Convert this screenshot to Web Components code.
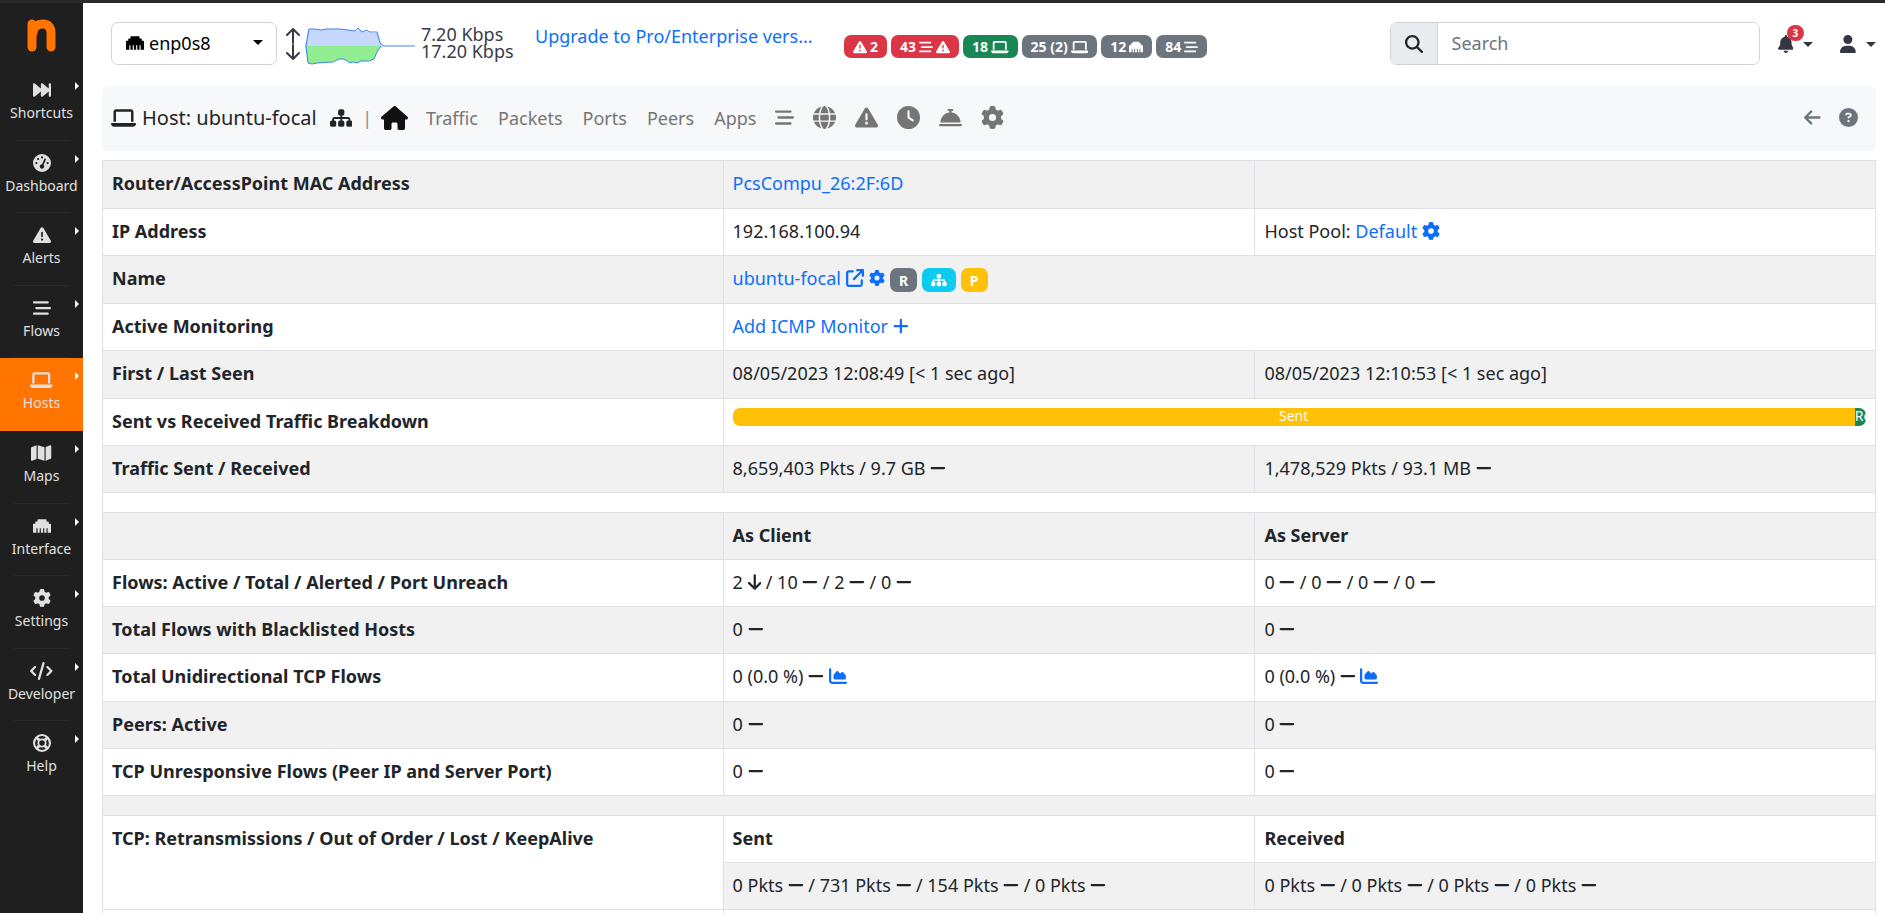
<!DOCTYPE html>
<html lang="en">
<head>
<meta charset="utf-8">
<meta name="viewport" content="width=device-width, initial-scale=1">
<title>Host: ubuntu-focal</title>
<style>
  body { margin: 0; font: 18px/28px "Noto Sans", sans-serif; color: #212529; background: #fff; overflow: hidden; }
</style>
</head>
<body>
<nt-app></nt-app>
<script>
const ICONS = {
  ethernet: [512, 'M496 192h-48v-48c0-8.800-7.200-16-16-16h-48V80c0-8.800-7.200-16-16-16H144c-8.800 0-16 7.200-16 16v48H80c-8.800 0-16 7.200-16 16v48H16c-8.800 0-16 7.200-16 16v224c0 8.800 7.200 16 16 16h80V320h32v128h64V320h32v128h64V320h32v128h64V320h32v128h80c8.800 0 16-7.200 16-16V208c0-8.800-7.200-16-16-16z'],
  warning: [512, 'M256 32c14.200 0 27.300 7.500 34.500 19.800l216 368c7.300 12.400 7.300 27.700 .2 40.100S486.300 480 472 480H40c-14.300 0-27.600-7.700-34.700-20.100s-7-27.800 .2-40.100l216-368C228.700 39.500 241.800 32 256 32zm0 128c-13.300 0-24 10.700-24 24V296c0 13.300 10.700 24 24 24s24-10.700 24-24V184c0-13.300-10.700-24-24-24zm32 224a32 32 0 1 0 -64 0 32 32 0 1 0 64 0z'],
  laptop: [640, 'M128 32C92.700 32 64 60.700 64 96V352h64V96H512V352h64V96c0-35.300-28.700-64-64-64H128zM19.200 384C8.600 384 0 392.600 0 403.200C0 445.600 34.400 480 76.800 480H563.200c42.400 0 76.800-34.400 76.800-76.800c0-10.600-8.600-19.200-19.200-19.200H19.200z'],
  stream: [512, 'M0 96C0 78.300 14.300 64 32 64H416c17.700 0 32 14.300 32 32s-14.300 32-32 32H32C14.300 128 0 113.700 0 96zM64 256c0-17.700 14.300-32 32-32H480c17.700 0 32 14.300 32 32s-14.300 32-32 32H96c-17.700 0-32-14.300-32-32zM448 416c0 17.700-14.300 32-32 32H32c-17.700 0-32-14.300-32-32s14.300-32 32-32H416c17.700 0 32 14.300 32 32z'],
  gear: [512, 'M495.9 166.6c3.2 8.7 .5 18.4-6.4 24.6l-43.3 39.4c1.1 8.3 1.7 16.8 1.7 25.4s-.6 17.1-1.7 25.4l43.3 39.4c6.9 6.2 9.6 15.9 6.4 24.6c-4.4 11.9-9.7 23.3-15.8 34.3l-4.7 8.1c-6.6 11-14 21.4-22.1 31.2c-5.9 7.2-15.7 9.6-24.5 6.8l-55.7-17.7c-13.4 10.3-28.2 18.9-44 25.4l-12.5 57.1c-2 9.1-9 16.3-18.2 17.8c-13.8 2.3-28 3.5-42.5 3.5s-28.7-1.2-42.5-3.5c-9.2-1.5-16.2-8.7-18.2-17.8l-12.5-57.1c-15.8-6.5-30.6-15.1-44-25.4L83.1 425.9c-8.8 2.8-18.6 .3-24.5-6.8c-8.1-9.8-15.5-20.2-22.1-31.2l-4.7-8.1c-6.1-11-11.4-22.4-15.8-34.3c-3.2-8.7-.5-18.4 6.4-24.6l43.3-39.4C64.6 273.1 64 264.6 64 256s.6-17.1 1.7-25.4L22.4 191.2c-6.9-6.2-9.6-15.9-6.4-24.6c4.4-11.9 9.7-23.3 15.8-34.3l4.7-8.1c6.6-11 14-21.4 22.1-31.2c5.9-7.2 15.7-9.6 24.5-6.8l55.7 17.7c13.4-10.3 28.2-18.9 44-25.4l12.5-57.1c2-9.1 9-16.3 18.2-17.8C227.3 1.2 241.5 0 256 0s28.7 1.2 42.5 3.5c9.2 1.5 16.2 8.7 18.2 17.8l12.5 57.1c15.8 6.5 30.6 15.1 44 25.4l55.7-17.7c8.8-2.8 18.6-.3 24.5 6.8c8.1 9.8 15.5 20.2 22.1 31.2l4.7 8.1c6.1 11 11.4 22.4 15.8 34.3zM256 336a80 80 0 1 0 0-160 80 80 0 1 0 0 160z'],
  sitemap: [576, 'M208 80c0-26.5 21.5-48 48-48h64c26.500 0 48 21.500 48 48v64c0 26.500-21.500 48-48 48h-8v40H464c30.900 0 56 25.100 56 56v32h8c26.500 0 48 21.500 48 48v64c0 26.500-21.500 48-48 48H464c-26.500 0-48-21.500-48-48V368c0-26.500 21.500-48 48-48h8V288c0-4.400-3.600-8-8-8H312v40h8c26.500 0 48 21.500 48 48v64c0 26.500-21.500 48-48 48H256c-26.500 0-48-21.500-48-48V368c0-26.500 21.500-48 48-48h8V280H112c-4.400 0-8 3.600-8 8v32h8c26.500 0 48 21.500 48 48v64c0 26.500-21.500 48-48 48H48c-26.500 0-48-21.500-48-48V368c0-26.500 21.500-48 48-48h8V288c0-30.900 25.100-56 56-56H264V192h-8c-26.500 0-48-21.500-48-48V80z'],
  home: [576, 'M575.8 255.5c0 18-15 32.1-32 32.1h-32l.7 160.2c0 2.7-.2 5.4-.5 8.1V472c0 22.1-17.9 40-40 40H456c-1.1 0-2.2 0-3.3-.1c-1.4 .1-2.8 .1-4.2 .1H416 392c-22.1 0-40-17.9-40-40V448 384c0-17.7-14.3-32-32-32H256c-17.7 0-32 14.3-32 32v64 24c0 22.1-17.9 40-40 40H160 128.1c-1.5 0-3-.1-4.5-.2c-1.2 .1-2.4 .2-3.6 .2H104c-22.1 0-40-17.9-40-40V360c0-.9 0-1.9 .1-2.8V287.6H32c-18 0-32-14-32-32.1c0-9 3-17 10-24L266.4 8c7-7 15-8 22-8s15 2 21 7L564.8 231.5c8 7 12 15 11 24z'],
  globe: [512, 'M352 256c0 22.2-1.2 43.6-3.3 64H163.3c-2.2-20.4-3.3-41.8-3.3-64s1.2-43.6 3.3-64H348.7c2.2 20.4 3.3 41.8 3.3 64zm28.8-64H503.9c5.3 20.5 8.1 41.9 8.1 64s-2.8 43.5-8.1 64H380.8c2.1-20.6 3.2-42 3.2-64s-1.1-43.4-3.2-64zm112.6-32H376.7c-10-63.9-29.8-117.4-55.3-151.6c78.3 20.7 142 77.5 171.9 151.6zm-149.1 0H167.7c6.1-36.4 15.5-68.6 27-94.7c10.5-23.6 22.2-40.7 33.5-51.5C239.4 3.2 248.7 0 256 0s16.6 3.2 27.8 13.8c11.3 10.8 23 27.9 33.5 51.5c11.6 26 20.9 58.2 27 94.7zm-209 0H18.6C48.6 85.900 112.2 29.100 190.600 8.400C165.100 42.600 145.300 96.100 135.300 160zM8.100 192H131.200c-2.100 20.600-3.200 42-3.200 64s1.100 43.400 3.200 64H8.100C2.800 299.500 0 278.100 0 256s2.800-43.500 8.100-64zM194.700 446.600c-11.600-26-20.900-58.200-27-94.600H344.300c-6.100 36.400-15.500 68.600-27 94.600c-10.500 23.600-22.200 40.700-33.500 51.500C272.600 508.800 263.300 512 256 512s-16.600-3.200-27.800-13.800c-11.300-10.800-23-27.900-33.500-51.500zM135.300 352c10 63.900 29.800 117.400 55.300 151.600C112.200 482.900 48.600 426.100 18.600 352H135.300zm358.100 0c-30 74.100-93.600 130.900-171.900 151.600c25.500-34.200 45.200-87.700 55.300-151.600H493.400z'],
  clock: [512, 'M256 0a256 256 0 1 1 0 512A256 256 0 1 1 256 0zM232 120V256c0 8 4 15.5 10.7 20l96 64c11 7.4 25.9 4.4 33.3-6.7s4.4-25.9-6.7-33.3L280 243.2V120c0-13.3-10.7-24-24-24s-24 10.7-24 24z'],
  concierge: [512, 'M216 64c-13.3 0-24 10.7-24 24s10.7 24 24 24h16v33.3C119.6 157.2 32 252.4 32 368H480c0-115.6-87.6-210.8-200-222.7V112h16c13.3 0 24-10.7 24-24s-10.7-24-24-24H256 216zM24 400c-13.3 0-24 10.7-24 24s10.7 24 24 24H488c13.3 0 24-10.7 24-24s-10.7-24-24-24H24z'],
  back: [448, 'M9.4 233.4c-12.5 12.5-12.5 32.8 0 45.3l160 160c12.5 12.5 32.8 12.5 45.3 0s12.5-32.8 0-45.3L109.2 288 416 288c17.7 0 32-14.3 32-32s-14.3-32-32-32l-306.700 0L214.600 118.600c12.500-12.500 12.500-32.800 0-45.300s-32.800-12.500-45.300 0l-160 160z'],
  down: [384, 'M169.4 470.6c12.5 12.5 32.8 12.5 45.3 0l160-160c12.5-12.5 12.5-32.8 0-45.3s-32.8-12.5-45.3 0L224 370.8 224 64c0-17.7-14.3-32-32-32s-32 14.3-32 32l0 306.700L54.600 265.400c-12.500-12.500-32.800-12.500-45.300 0s-12.500 32.800 0 45.300l160 160z'],
  question: [512, 'M256 512A256 256 0 1 0 256 0a256 256 0 1 0 0 512zM169.8 165.3c7.9-22.3 29.1-37.3 52.8-37.3h58.3c34.9 0 63.1 28.3 63.1 63.1c0 22.6-12.1 43.5-31.7 54.8L280 264.4c-.2 13-10.9 23.6-24 23.6c-13.3 0-24-10.7-24-24V250.5c0-8.6 4.6-16.5 12.1-20.800l44.300-25.400c4.700-2.700 7.600-7.700 7.600-13.100c0-8.400-6.800-15.100-15.100-15.100H222.600c-3.400 0-6.400 2.100-7.500 5.300l-.4 1.200c-4.400 12.500-18.200 19-30.600 14.600s-19-18.200-14.600-30.600l.4-1.200zM224 352a32 32 0 1 1 64 0 32 32 0 1 1 -64 0z'],
  minus: [448, 'M432 256c0 17.7-14.3 32-32 32L48 288c-17.7 0-32-14.3-32-32s14.3-32 32-32l352 0c17.7 0 32 14.3 32 32z'],
  plus: [448, 'M256 80c0-17.7-14.3-32-32-32s-32 14.3-32 32V224H48c-17.7 0-32 14.3-32 32s14.3 32 32 32H192V432c0 17.7 14.3 32 32 32s32-14.3 32-32V288H400c17.7 0 32-14.3 32-32s-14.3-32-32-32H256V80z'],
  chart: [512, 'M64 64c0-17.7-14.3-32-32-32S0 46.3 0 64V400c0 44.2 35.8 80 80 80H480c17.7 0 32-14.3 32-32s-14.3-32-32-32H80c-8.800 0-16-7.200-16-16V64zm96 288H448c17.700 0 32-14.300 32-32V251.800c0-7.600-2.700-15-7.700-20.800l-65.800-76.800c-12.100-14.200-33.700-15-46.900-1.800l-21 21c-10 10-26.400 9.200-35.400-1.600l-39.200-47c-12.600-15.100-35.700-15.400-48.700-.6L135.900 215c-5.100 5.800-7.900 13.300-7.900 21.100v84c0 17.700 14.300 32 32 32z'],
  user: [448, 'M224 256A128 128 0 1 0 224 0a128 128 0 1 0 0 256zm-45.7 48C79.8 304 0 383.8 0 482.3C0 498.7 13.3 512 29.7 512H418.3c16.4 0 29.7-13.3 29.7-29.7C448 383.8 368.2 304 269.7 304H178.3z'],
  bell: [448, 'M224 0c-17.7 0-32 14.3-32 32V51.2C119 66 64 130.6 64 208v18.8c0 47-17.3 92.4-48.5 127.6l-7.4 8.3c-8.4 9.4-10.4 22.9-5.3 34.4S19.4 416 32 416H416c12.6 0 24-7.4 29.2-18.9s3.100-25-5.300-34.400l-7.400-8.300C401.300 319.200 384 273.900 384 226.800V208c0-77.400-55-142-128-156.800V32c0-17.700-14.300-32-32-32zm45.300 493.300c12-12 18.700-28.300 18.700-45.300H224 160c0 17 6.700 33.300 18.700 45.300s28.300 18.700 45.300 18.700s33.300-6.700 45.300-18.700z'],
  search: [512, 'M416 208c0 45.9-14.9 88.3-40 122.7L502.6 457.4c12.5 12.5 12.5 32.8 0 45.3s-32.8 12.5-45.3 0L330.7 376c-34.4 25.2-76.8 40-122.7 40C93.1 416 0 322.9 0 208S93.1 0 208 0S416 93.1 416 208zM208 352a144 144 0 1 0 0-288 144 144 0 1 0 0 288z'],
  forward: [512, 'M18.4 445c11.2 5.3 24.5 3.6 34.1-4.4L224 297.7V416c0 12.4 7.2 23.7 18.4 29s24.5 3.6 34.1-4.4L448 297.7V416c0 17.7 14.3 32 32 32s32-14.3 32-32V96c0-17.7-14.3-32-32-32s-32 14.3-32 32V214.3L276.5 71.4c-9.5-7.9-22.8-9.7-34.1-4.4S224 83.6 224 96V214.3L52.5 71.4c-9.5-7.9-22.8-9.7-34.1-4.4S0 83.6 0 96V416c0 12.4 7.2 23.7 18.4 29z'],
  gauge: [512, 'M0 256a256 256 0 1 1 512 0A256 256 0 1 1 0 256zM288 96a32 32 0 1 0 -64 0 32 32 0 1 0 64 0zM256 416c35.3 0 64-28.7 64-64c0-17.4-6.9-33.1-18.1-44.6L366 161.7c5.3-12.1-.2-26.3-12.3-31.6s-26.3 .2-31.6 12.3L257.9 288c-.6 0-1.3 0-1.9 0c-35.3 0-64 28.7-64 64s28.7 64 64 64zM176 144a32 32 0 1 0 -64 0 32 32 0 1 0 64 0zM96 288a32 32 0 1 0 0-64 32 32 0 1 0 0 64zm352-32a32 32 0 1 0 -64 0 32 32 0 1 0 64 0z'],
  map: [576, 'M384 476.1L192 421.2V35.9L384 90.8V476.1zm32-1.200V88.400L543.100 37.500c15.800-6.300 32.900 5.300 32.900 22.300V394.600c0 9.800-6 18.600-15.100 22.300L416 474.800zM15.100 95.100L160 37.200V423.600L32.900 474.500C17.100 480.800 0 469.200 0 452.200V117.400c0-9.800 6-18.600 15.100-22.300z'],
  code: [640, 'M392.8 1.2c-17-4.9-34.7 5-39.6 22l-128 448c-4.9 17 5 34.7 22 39.6s34.7-5 39.6-22l128-448c4.9-17-5-34.7-22-39.6zm80.6 120.1c-12.5 12.5-12.5 32.8 0 45.3L562.7 256l-89.4 89.4c-12.5 12.5-12.5 32.8 0 45.3s32.8 12.5 45.3 0l112-112c12.5-12.5 12.5-32.8 0-45.3l-112-112c-12.5-12.5-32.8-12.5-45.3 0zm-306.700 0c-12.500-12.500-32.800-12.500-45.300 0l-112 112c-12.500 12.500-12.500 32.800 0 45.300l112 112c12.500 12.500 32.800 12.500 45.300 0s12.500-32.800 0-45.300L77.300 256l89.400-89.400c12.500-12.500 12.500-32.800 0-45.300z'],
  external: [512, 'M320 0c-17.7 0-32 14.3-32 32s14.3 32 32 32h82.7L201.4 265.4c-12.5 12.5-12.5 32.8 0 45.3s32.8 12.5 45.3 0L448 109.3V192c0 17.7 14.3 32 32 32s32-14.3 32-32V32c0-17.7-14.3-32-32-32H320zM80 32C35.8 32 0 67.8 0 112V432c0 44.2 35.8 80 80 80H400c44.2 0 80-35.8 80-80V320c0-17.7-14.3-32-32-32s-32 14.3-32 32V432c0 8.8-7.2 16-16 16H80c-8.800 0-16-7.200-16-16V112c0-8.800 7.200-16 16-16H192c17.700 0 32-14.300 32-32s-14.300-32-32-32H80z'],
};
const LIFE_RING = `<g fill="none" stroke="currentColor"><circle cx="256" cy="256" r="226" stroke-width="60"/><circle cx="256" cy="256" r="104" stroke-width="52"/><path stroke-width="84" d="M98 98l80 80M414 98l-80 80M98 414l80-80M414 414l-80-80"/></g>`;

function define(name, html, setup) {
  const template = document.createElement('template');
  template.innerHTML = html;
  customElements.define(name, class extends HTMLElement {
    constructor() {
      super();
      this.attachShadow({ mode: 'open' }).append(template.content.cloneNode(true));
    }
    connectedCallback() { if (setup) setup(this, this.shadowRoot); }
  });
}

define('ui-icon', `<style>
  :host { display: inline-block; height: 1em; line-height: 0; vertical-align: -2px; flex: none; }
  svg { display: block; height: 1em; width: auto; fill: currentColor; }
</style><svg aria-hidden="true"></svg>`, (host, root) => {
  const name = host.getAttribute('name');
  const svg = root.querySelector('svg');
  const [width, d] = ICONS[name] || [512, ''];
  svg.setAttribute('viewBox', `0 0 ${width} 512`);
  svg.innerHTML = name === 'lifering' ? LIFE_RING : `<path d="${d}"/>`;
});

define('ui-badge', `<style>
  :host { display: inline-flex; align-items: center; gap: 3px; box-sizing: border-box; height: 23px; padding: 0 9px; border-radius: 7px;
    font-size: 14px; line-height: 23px; font-weight: 700; color: #fff; background: #6c757d; white-space: nowrap; }
  :host([tone=danger]) { background: #dc3545; }
  :host([tone=success]) { background: #198754; }
  :host([tone=info]) { background: #0dcaf0; }
  :host([tone=warning]) { background: #ffc107; }
</style><slot></slot>`);

define('side-item', `<style>
  :host { display: block; color: #e0e0e0; }
  a { position: relative; box-sizing: border-box; height: 100%; padding-top: 13px; display: flex; flex-direction: column; align-items: center; gap: 3px;
    color: inherit; text-decoration: none; font-size: 14px; line-height: 21px; }
  a::before { content: ""; position: absolute; top: 14px; right: 4px; border: 4px solid transparent; border-left-color: #fff; border-right: 0; }
  a::after { content: ""; position: absolute; bottom: 0; left: 14px; right: 14px; height: 1px; background: #292929; }
  ui-icon { font-size: 18px; }
  :host([active]) { background: #ff7500; }
  :host([active]) a::after, :host([last]) a::after { display: none; }
</style><a href="#"><ui-icon></ui-icon><slot></slot></a>`, (host, root) => {
  const old = root.querySelector('ui-icon');
  const icon = document.createElement('ui-icon');
  icon.setAttribute('name', host.getAttribute('icon'));
  old.replaceWith(icon);
});

define('app-sidebar', `<style>
  :host { display: block; background: #1f1f1f; }
  .logo { display: flex; justify-content: center; padding: 16px 0; }
  svg { display: block; }
  nav { display: grid; grid-auto-rows: 1fr; min-height: 726px; }
</style>
<a class="logo" href="#" aria-label="ntopng home"><svg width="30" height="33" viewBox="0 0 30 33" fill="none" stroke="#ff7500" stroke-linecap="round" stroke-linejoin="round"><path stroke-width="9" d="M5 5v23"/><path stroke-width="9" d="M24 28V14c0-6-3-9-8-9-5 0-10 3-10 9"/></svg></a>
<nav aria-label="Main">
  <side-item icon="forward">Shortcuts</side-item>
  <side-item icon="gauge">Dashboard</side-item>
  <side-item icon="warning">Alerts</side-item>
  <side-item icon="stream">Flows</side-item>
  <side-item icon="laptop" active>Hosts</side-item>
  <side-item icon="map">Maps</side-item>
  <side-item icon="ethernet">Interface</side-item>
  <side-item icon="gear">Settings</side-item>
  <side-item icon="code">Developer</side-item>
  <side-item icon="lifering" last>Help</side-item>
</nav>`);

define('top-bar', `<style>
  :host { display: flex; align-items: flex-start; padding: 19px 0 21px 9px; }
  :host > * { flex: none; }
  .iface { position: relative; width: 166px; height: 43px; }
  select { appearance: none; box-sizing: border-box; width: 100%; height: 43px; padding: 0 0 2px 37px; border: 1px solid #ced4da; border-radius: 7px;
    background: #fff; font: inherit; color: #000; }
  .iface ui-icon { position: absolute; left: 15px; top: 12px; color: #000; pointer-events: none; }
  .caret { width: 0; border: 5px solid transparent; border-top-color: currentColor; border-bottom: 0; }
  .iface .caret { position: absolute; right: 14px; top: 18px; color: #000; pointer-events: none; }
  .arrows { margin: 5px 0 0 9px; color: #373c48; }
  .graph { margin: 5px 0 0 4px; }
  .rate { margin: 4px 0 0 6px; line-height: 17px; color: #373c48; width: 95px; }
  a.up { margin: 0 0 0 19px; width: 290px; color: #0d6efd; text-decoration: none; white-space: nowrap; line-height: 28px; }
  .badges { display: flex; gap: 4px; margin: 13px auto 0 19px; }
  .search { display: flex; width: 370px; height: 43px; box-sizing: border-box; border: 1px solid #ced4da; border-radius: 7px; overflow: hidden; }
  .search label { display: grid; place-items: center; width: 46px; background: #e9ecef; border-right: 1px solid #ced4da; }
  input { flex: 1; min-width: 0; border: 0; padding: 0 14px 2px; font: inherit; outline: 0; }
  input::placeholder { color: #6c757d; opacity: 1; }
  button { position: relative; display: flex; align-items: center; margin: 0; padding: 0; border: 0; background: none; color: #343741; font: inherit; }
  .bell { margin: 13px 0 0 18px; gap: 10px; }
  .user { margin: 13px 0 0 27px; gap: 10px; }
  .count { position: absolute; left: 9px; top: -10px; height: 16px; padding: 0 6px; border-radius: 8px; background: #dc3545; color: #fff; font-size: 10px; line-height: 16px; font-weight: 700; }
</style>
<div class="iface"><select aria-label="Interface"><option>enp0s8</option></select><ui-icon name="ethernet"></ui-icon><span class="caret"></span></div>
<svg class="arrows" width="15" height="34" viewBox="0 0 15 34" fill="none" stroke="currentColor" stroke-width="2" stroke-linecap="round" stroke-linejoin="round"><path d="M7 16V2M1 8l6-6 6 6M7 18v14M1 26l6 6 6-6"/></svg>
<svg class="graph" width="110" height="38" viewBox="0 0 110 38"><path fill="#c6d8fb" d="M0 19L3 2h5l8 1 4-1h15l8 1 8 1 3-2 4 3 5-1 2 2h8l4 13 2 1z"/><path fill="#90ee90" d="M0 19l3 17 4 1 5-1 15-1 7-3h5l6 4 3-1 4 1 4-2h9l4-2 4-9 4-4z"/><path fill="none" stroke="#3f83f8" d="M1 19L4 2h5l8 1 4-1h14l8 1 7 1 3-3 4 4 5-2 2 2h8l3 11 4 3h31M1 19l2 17 4 1 5-1 16-1 6-3h5l6 4 3-1 4 1 4-2h8l5-2 3-7 4-6"/></svg>
<div class="rate">7.20 Kbps<br>17.20 Kbps</div>
<a class="up" href="#">Upgrade to Pro/Enterprise vers...</a>
<div class="badges">
  <ui-badge tone="danger"><ui-icon name="warning"></ui-icon>2</ui-badge>
  <ui-badge tone="danger">43<ui-icon name="stream"></ui-icon><ui-icon name="warning"></ui-icon></ui-badge>
  <ui-badge tone="success">18<ui-icon name="laptop"></ui-icon></ui-badge>
  <ui-badge>25 (2)<ui-icon name="laptop"></ui-icon></ui-badge>
  <ui-badge>12<ui-icon name="ethernet"></ui-icon></ui-badge>
  <ui-badge>84<ui-icon name="stream"></ui-icon></ui-badge>
</div>
<div class="search"><label for="q" aria-label="Search"><ui-icon name="search"></ui-icon></label><input id="q" type="text" placeholder="Search"></div>
<button class="bell" aria-label="Notifications"><ui-icon name="bell"></ui-icon><span class="count">3</span><span class="caret"></span></button>
<button class="user" aria-label="Account"><ui-icon name="user"></ui-icon><span class="caret"></span></button>`);

define('host-nav', `<style>
  :host { display: flex; align-items: center; box-sizing: border-box; height: 65px; padding: 0 18px 2px 9px; border-radius: 6px; background: #f7f8fa; color: #757575; }
  .title { display: flex; align-items: center; gap: 6px; font-size: 20px; color: #212529; }
  .title a { margin-left: 7px; }
  .bar { margin: 0 9px 0 10px; color: #8a8d91; }
  a { color: inherit; text-decoration: none; display: block; }
  .home { color: #111; font-size: 24px; margin-right: 18px; }
  .home, .icons a, .title a, .tools a { display: flex; }
  .links { display: flex; align-items: center; gap: 20px; }
  .icons { display: flex; align-items: center; gap: 19px; margin-left: 19px; font-size: 23px; }
  .icons .flows { font-size: 19px; }
  .tools { margin-left: auto; display: flex; align-items: center; gap: 18px; color: #6c757d; font-size: 19px; }
</style>
<div class="title"><ui-icon name="laptop"></ui-icon><span>Host: ubuntu-focal</span><a href="#" aria-label="Map"><ui-icon name="sitemap"></ui-icon></a></div>
<span class="bar">|</span>
<a class="home" href="#" aria-label="Home"><ui-icon name="home"></ui-icon></a>
<div class="links"><a href="#">Traffic</a><a href="#">Packets</a><a href="#">Ports</a><a href="#">Peers</a><a href="#">Apps</a></div>
<div class="icons">
  <a class="flows" href="#" aria-label="Flows"><ui-icon name="stream"></ui-icon></a>
  <a href="#" aria-label="Geo map"><ui-icon name="globe"></ui-icon></a>
  <a href="#" aria-label="Alerts"><ui-icon name="warning"></ui-icon></a>
  <a href="#" aria-label="Timeseries"><ui-icon name="clock"></ui-icon></a>
  <a href="#" aria-label="Services"><ui-icon name="concierge"></ui-icon></a>
  <a href="#" aria-label="Settings"><ui-icon name="gear"></ui-icon></a>
</div>
<div class="tools"><a href="#" aria-label="Back"><ui-icon name="back"></ui-icon></a><a href="#" aria-label="Help"><ui-icon name="question"></ui-icon></a></div>`);

define('traffic-bar', `<style>
  :host { display: flex; height: 18px; margin-top: 1px; border-radius: 7px; overflow: hidden; font-size: 14px; line-height: 16px; color: #fff; }
  div { overflow: hidden; white-space: nowrap; }
  .sent { flex: 1; background: #ffc107; text-align: center; }
  .received { flex: 0 0 1%; background: #198754; }
</style><div class="sent">Sent</div><div class="received">Received</div>`);

const dash = '<ui-icon name="minus"></ui-icon>';
const series = values => values.map(v => `${v} ${dash}`).join(' / ');
const pair = (label, client, server, cls = '') => `<tr class="${cls}"><th scope="row">${label}</th><td>${client}</td><td>${server}</td></tr>`;
const area = '<a href="#" aria-label="Chart"><ui-icon name="chart"></ui-icon></a>';

define('host-table', `<style>
  :host { display: block; }
  table { width: 100%; table-layout: fixed; border-collapse: collapse; }
  .side { width: 35%; } .mid { width: 30%; }
  tr { height: 47px; }
  tr.tall { height: 48px; }
  tr.gap { height: 20px; }
  tr:nth-child(odd) { background: #f1f1f1; }
  th, td { box-sizing: border-box; padding: 8px 9px 10px; border: 1px solid #dee2e6; text-align: left; vertical-align: top; height: inherit; }
  .gap td { padding: 0; }
  .white { background: #fff; }
  a { color: #0d6efd; text-decoration: none; }
  .small { font-size: 16px; vertical-align: 0; }
  .name { display: flex; align-items: center; gap: 5px; }
  .name a { display: flex; align-items: center; gap: 5px; }
  .name ui-badge { height: 24px; margin-top: 4px; }
</style>
<table>
  <colgroup><col class="side"><col class="mid"><col class="side"></colgroup>
  <tbody>
  ${pair('Router/AccessPoint MAC Address', '<a href="#">PcsCompu_26:2F:6D</a>', '', 'tall')}
  ${pair('IP Address', '192.168.100.94', 'Host Pool: <a href="#">Default <ui-icon name="gear"></ui-icon></a>')}
  <tr class="tall"><th scope="row">Name</th><td colspan="2"><div class="name"><a href="#">ubuntu-focal</a><a href="#" aria-label="Open"><ui-icon name="external"></ui-icon></a><a href="#" aria-label="Configure"><ui-icon class="small" name="gear"></ui-icon></a><ui-badge>R</ui-badge><ui-badge tone="info"><ui-icon name="sitemap"></ui-icon></ui-badge><ui-badge tone="warning">P</ui-badge></div></td></tr>
  <tr><th scope="row">Active Monitoring</th><td colspan="2"><a href="#">Add ICMP Monitor <ui-icon name="plus"></ui-icon></a></td></tr>
  ${pair('First / Last Seen', '08/05/2023 12:08:49 [&lt; 1 sec ago]', '08/05/2023 12:10:53 [&lt; 1 sec ago]', 'tall')}
  <tr><th scope="row">Sent vs Received Traffic Breakdown</th><td colspan="2"><traffic-bar></traffic-bar></td></tr>
  ${pair('Traffic Sent / Received', `8,659,403 Pkts / 9.7 GB ${dash}`, `1,478,529 Pkts / 93.1 MB ${dash}`)}
  <tr class="gap"><td colspan="3"></td></tr>
  <tr><th></th><th scope="col">As Client</th><th scope="col">As Server</th></tr>
  ${pair('Flows: Active / Total / Alerted / Port Unreach', `2 <ui-icon name="down"></ui-icon> / ${series([10, 2, 0])}`, series([0, 0, 0, 0]))}
  ${pair('Total Flows with Blacklisted Hosts', series([0]), series([0]))}
  ${pair('Total Unidirectional TCP Flows', `0 (0.0 %) ${dash} ${area}`, `0 (0.0 %) ${dash} ${area}`, 'tall')}
  ${pair('Peers: Active', series([0]), series([0]))}
  ${pair('TCP Unresponsive Flows (Peer IP and Server Port)', series([0]), series([0]))}
  <tr class="gap"><td colspan="3"></td></tr>
  <tr><th class="white" scope="rowgroup" rowspan="2">TCP: Retransmissions / Out of Order / Lost / KeepAlive</th><th scope="col">Sent</th><th scope="col">Received</th></tr>
  <tr><td>${series(['0 Pkts', '731 Pkts', '154 Pkts', '0 Pkts'])}</td><td>${series(['0 Pkts', '0 Pkts', '0 Pkts', '0 Pkts'])}</td></tr>
  <tr><th></th><td colspan="2"></td></tr>
  </tbody>
</table>`);

define('nt-app', `<style>
  :host { display: grid; grid-template-columns: 83px minmax(0, 1fr); box-sizing: border-box; height: 100vh; overflow: hidden; border-top: 3px solid #2b2a2b; }
  main { padding: 0 9px 0 19px; }
  host-table { margin-top: 9px; }
</style>
<app-sidebar></app-sidebar>
<main><top-bar></top-bar><host-nav></host-nav><host-table></host-table></main>`);
</script>
</body>
</html>
